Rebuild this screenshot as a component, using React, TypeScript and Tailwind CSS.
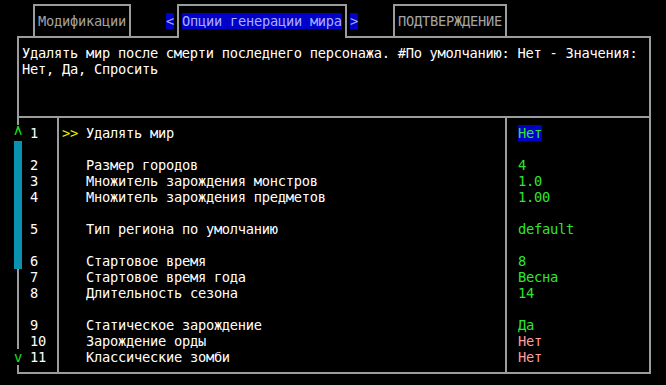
import { Fragment } from 'react'

type Row = {
  num: number
  label: string
  value: string
  tone?: 'green' | 'pink'
  selected?: boolean
} | null

const rows: Row[] = [
  { num: 1, label: 'Удалять мир', value: 'Нет', selected: true },
  null,
  { num: 2, label: 'Размер городов', value: '4' },
  { num: 3, label: 'Множитель зарождения монстров', value: '1.0' },
  { num: 4, label: 'Множитель зарождения предметов', value: '1.00' },
  null,
  { num: 5, label: 'Тип региона по умолчанию', value: 'default' },
  null,
  { num: 6, label: 'Стартовое время', value: '8' },
  { num: 7, label: 'Стартовое время года', value: 'Весна' },
  { num: 8, label: 'Длительность сезона', value: '14' },
  null,
  { num: 9, label: 'Статическое зарождение', value: 'Да' },
  { num: 10, label: 'Зарождение орды', value: 'Нет', tone: 'pink' },
  { num: 11, label: 'Классические зомби', value: 'Нет', tone: 'pink' },
]

function Tabs() {
  return (
    <div className="flex h-[36px] items-start pl-[33px] pt-[4px]">
      <div className="h-[32px] w-[98px] border-2 border-b-0 border-[#9c9c9c] pl-[3px] pt-[7px] text-[#a4a4a4]">
        Модификации
      </div>
      <span className="mt-[9px] ml-[35px] h-4 w-[8px] bg-[#0000c8] text-[#a8b0ff]">&lt;</span>
      <div className="relative z-10 ml-[3px] h-[34px] w-[170px] border-2 border-b-0 border-[#9c9c9c] bg-black pl-[3px] pt-[7px]">
        <span className="inline-block h-4 w-[160px] bg-[#0000c8] text-[#a8b0ff]">Опции генерации мира</span>
      </div>
      <span className="mt-[9px] ml-[3px] h-4 w-[8px] bg-[#0000c8] text-[#a8b0ff]">&gt;</span>
      <div className="ml-[35px] h-[32px] w-[114px] border-2 border-b-0 border-[#9c9c9c] pl-[3px] pt-[7px] text-[#a4a4a4]">
        ПОДТВЕРЖДЕНИЕ
      </div>
    </div>
  )
}

function Scrollbar() {
  return (
    <div className="-ml-[3px] flex w-[8px] flex-col items-center">
      <div className="h-[7px] w-[2px] bg-[#9c9c9c]" />
      <div className="h-4 text-[#1ee01e]">
        <span className="inline-block translate-y-[6px] scale-y-[2.4]">^</span>
      </div>
      <div className="h-[128px] w-full bg-[#0a93b0]" />
      <div className="h-[80px] w-[2px] bg-[#9c9c9c]" />
      <div className="h-4 text-[#1ee01e]">v</div>
      <div className="h-[7px] w-[2px] bg-[#9c9c9c]" />
    </div>
  )
}

export default function App() {
  return (
    <div
      className="h-[385px] w-[666px] overflow-hidden bg-black text-[13.7px] leading-4 tracking-[-0.248px] text-white"
      style={{ fontFamily: '"DejaVu Sans Mono", "Liberation Mono", monospace' }}
    >
      <Tabs />
      <div className="ml-[17px] w-[634px] border-t-2 border-r-2 border-b-2 border-[#9c9c9c]">
        <div className="h-[80px] border-b-2 border-l-2 border-[#9c9c9c] pl-[3px] pt-[7px] whitespace-pre">
          <div>Удалять мир после смерти последнего персонажа. #По умолчанию: Нет - Значения:</div>
          <div>Нет, Да, Спросить</div>
        </div>

        <div className="flex h-[254px]">
          <Scrollbar />

          <div className="w-[35px] pl-[8px] pt-[7px]">
            {rows.map((row, i) => (
              <div key={i} className="h-4">
                {row ? row.num : ''}
              </div>
            ))}
          </div>

          <div className="w-[2px] bg-[#9c9c9c]" />

          <div className="w-[446px] pl-[3px] pt-[7px]">
            {rows.map((row, i) => (
              <div key={i} className="flex h-4 whitespace-pre">
                <span className="w-[24px] text-[#f0f000]">{row?.selected ? '>>' : ''}</span>
                <span>{row ? row.label : ''}</span>
              </div>
            ))}
          </div>

          <div className="w-[2px] bg-[#9c9c9c]" />

          <div className="w-[142px] pl-[11px] pt-[7px]">
            {rows.map((row, i) => (
              <Fragment key={i}>
                {row ? (
                  <div className="flex h-4">
                    <span
                      className={
                        row.selected
                          ? 'bg-[#0000c8] text-[#2ee62e]'
                          : row.tone === 'pink'
                            ? 'text-[#ff9c9c]'
                            : 'text-[#2ee62e]'
                      }
                    >
                      {row.value}
                    </span>
                  </div>
                ) : (
                  <div className="h-4" />
                )}
              </Fragment>
            ))}
          </div>
        </div>
      </div>
    </div>
  )
}
